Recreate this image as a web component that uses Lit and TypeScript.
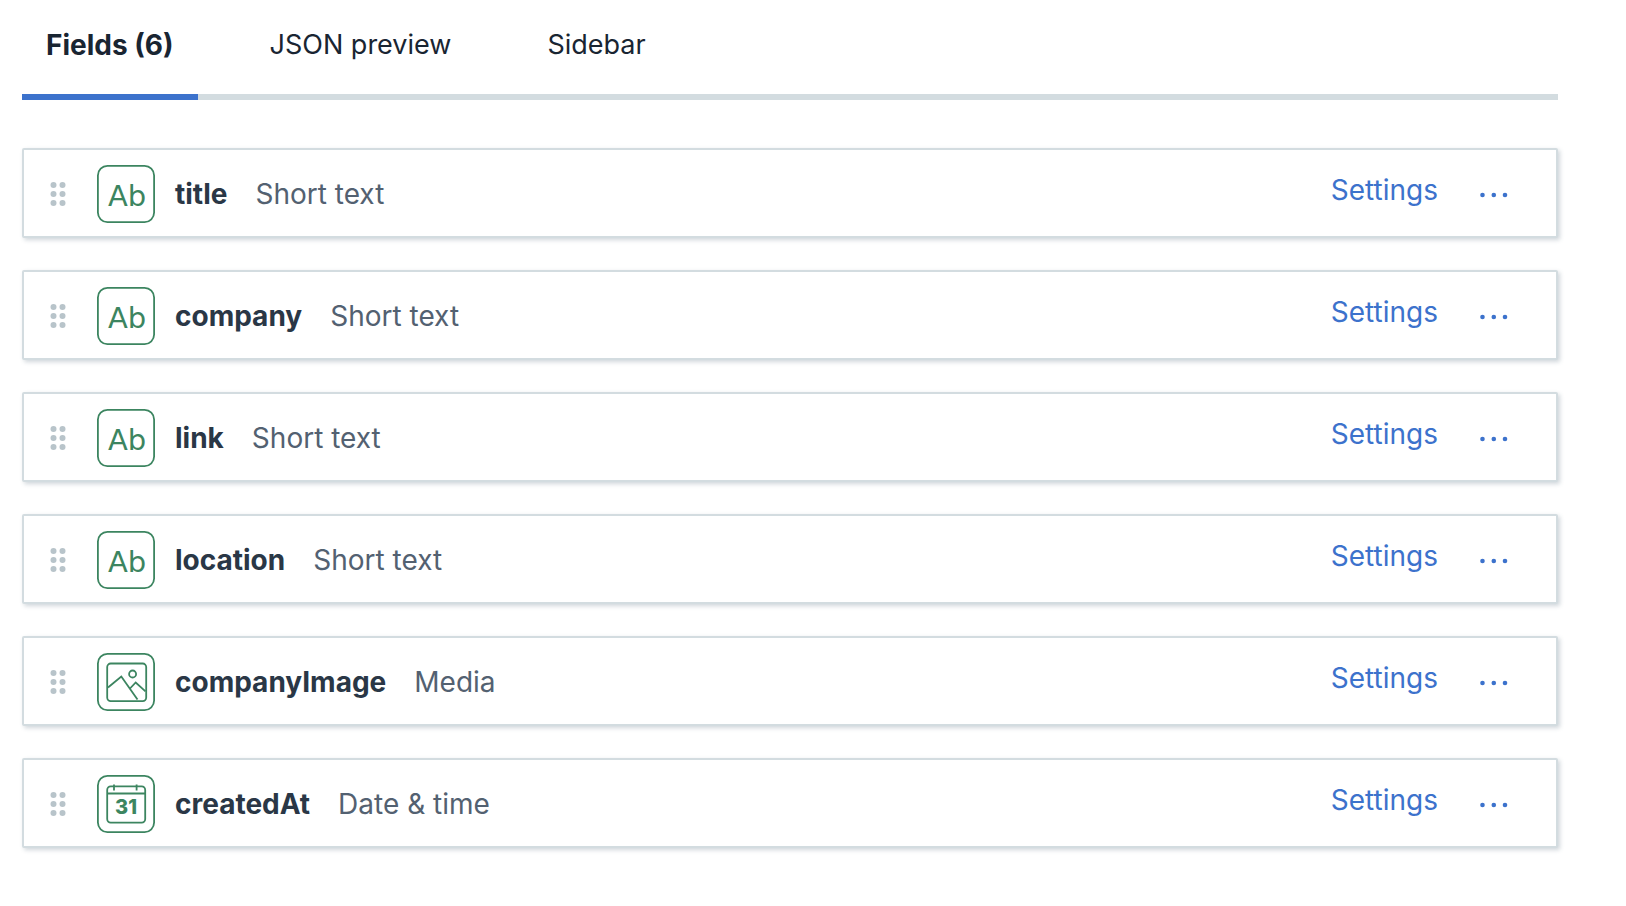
import { LitElement, html, svg, css } from "lit";
import { customElement, property, state } from "lit/decorators.js";

type FieldKind = "text" | "media" | "date";

interface Field {
  name: string;
  type: string;
  kind: FieldKind;
}

const FIELDS: Field[] = [
  { name: "title", type: "Short text", kind: "text" },
  { name: "company", type: "Short text", kind: "text" },
  { name: "link", type: "Short text", kind: "text" },
  { name: "location", type: "Short text", kind: "text" },
  { name: "companyImage", type: "Media", kind: "media" },
  { name: "createdAt", type: "Date & time", kind: "date" },
];

@customElement("field-icon")
class FieldIcon extends LitElement {
  @property() kind: FieldKind = "text";

  static styles = css`
    :host {
      display: block;
      flex: none;
      line-height: 0;
    }
    .icon {
      width: 58px;
      height: 58px;
      fill: none;
      stroke: #3c8560;
      stroke-width: 1.8;
    }
    .glyph {
      fill: #3c8560;
      stroke: none;
      text-anchor: middle;
    }
    .letters {
      font-family: "DejaVu Sans", sans-serif;
      font-size: 29px;
    }
    .day {
      font-family: Inter, sans-serif;
      font-size: 20px;
      font-weight: 800;
    }
  `;

  private inner() {
    if (this.kind === "media") {
      return svg`
        <rect x="10.2" y="10.5" width="39" height="37.6" rx="3.5"></rect>
        <path d="M11 34.5 24.3 23.6 40.5 46.5M33 35.5l5.7-6L48.5 38.3"></path>
        <circle cx="35.6" cy="21" r="3.5"></circle>`;
    }
    if (this.kind === "date") {
      return svg`
        <rect x="10.2" y="11.4" width="38" height="36.2" rx="3.5"></rect>
        <path d="M10.2 18.5h38M17 9.5v6M39.6 9.5v6"></path>
        <text class="glyph day" x="29" y="39">31</text>`;
    }
    return svg`<text class="glyph letters" x="30" y="41">Ab</text>`;
  }

  render() {
    return html`<svg class="icon" viewBox="0 0 58 58" aria-hidden="true">
      <rect x="0.9" y="0.9" width="56.2" height="56.2" rx="9.5"></rect>
      ${this.inner()}
    </svg>`;
  }
}

@customElement("field-row")
class FieldRow extends LitElement {
  @property({ attribute: false }) field!: Field;

  static styles = css`
    :host {
      display: block;
    }
    .card {
      display: flex;
      align-items: center;
      box-sizing: border-box;
      min-height: 90px;
      padding: 2px 44px 0 24px;
      background: #fff;
      border: 2px solid #d3dce0;
      border-radius: 2px;
      box-shadow: 2px 2px 4px rgba(67, 90, 111, 0.25);
    }
    .button {
      margin: 0;
      padding: 0;
      border: 0;
      background: none;
      font: inherit;
      color: #3c72cc;
      cursor: pointer;
      line-height: 36px;
    }
    .drag {
      line-height: 0;
      margin-right: 28px;
      cursor: grab;
    }
    .handle {
      width: 21px;
      height: 26px;
      fill: #b8c4ca;
    }
    .name {
      margin: 0 28px 0 20px;
      font-size: inherit;
      font-weight: 700;
      color: #2a3746;
    }
    .type {
      color: #536171;
    }
    .actions {
      display: flex;
      align-items: center;
      gap: 38px;
      margin-left: auto;
      padding-bottom: 8px;
    }
    .menu {
      padding-top: 10px;
    }
    .dots {
      display: block;
      width: 36px;
      height: 12px;
      fill: #3c72cc;
    }
  `;

  render() {
    const { name, type, kind } = this.field;
    return html`<article class="card">
      <button class="button drag" aria-label="Reorder ${name}">
        <svg class="handle" viewBox="0 0 21 26" aria-hidden="true">
          ${[4, 13, 22].map(
            (y) => svg`<circle cx="5.5" cy=${y} r="3"></circle><circle cx="14.5" cy=${y} r="3"></circle>`
          )}
        </svg>
      </button>
      <field-icon kind=${kind}></field-icon>
      <h2 class="name">${name}</h2>
      <span class="type">${type}</span>
      <div class="actions">
        <button class="button">Settings</button>
        <button class="button menu" aria-label="More actions for ${name}">
          <svg class="dots" viewBox="0 0 36 12" aria-hidden="true">
            <circle cx="6.5" cy="6" r="2.3"></circle>
            <circle cx="17.8" cy="6" r="2.3"></circle>
            <circle cx="29" cy="6" r="2.3"></circle>
          </svg>
        </button>
      </div>
    </article>`;
  }
}

@customElement("app-root")
class AppRoot extends LitElement {
  @state() private active = 0;

  static styles = css`
    :host {
      display: block;
      padding: 0 68px 32px 22px;
      background: #fff;
      font-family: Inter, sans-serif;
      font-size: 28px;
      line-height: 36px;
    }
    .tabs {
      display: flex;
      gap: 48px;
      box-shadow: inset 0 -6px #d3dce0;
      font-size: 27px;
    }
    .tab {
      margin: 0;
      padding: 27px 24px 31px;
      border: 0;
      border-bottom: 6px solid transparent;
      background: none;
      font: inherit;
      color: #192532;
      cursor: pointer;
    }
    .tab.active {
      border-bottom-color: #3c72cc;
      font-size: 28px;
      font-weight: 700;
    }
    .list {
      display: flex;
      flex-direction: column;
      gap: 32px;
      margin: 48px 0 0;
      padding: 0;
      list-style: none;
    }
  `;

  render() {
    const tabs = [`Fields (${FIELDS.length})`, "JSON preview", "Sidebar"];
    return html`
      <nav class="tabs" role="tablist">
        ${tabs.map(
          (label, i) => html`<button
            class="tab ${i === this.active ? "active" : ""}"
            role="tab"
            aria-selected=${i === this.active ? "true" : "false"}
            @click=${() => (this.active = i)}
          >${label}</button>`
        )}
      </nav>
      <ul class="list">
        ${FIELDS.map((f) => html`<li><field-row .field=${f}></field-row></li>`)}
      </ul>
    `;
  }
}
